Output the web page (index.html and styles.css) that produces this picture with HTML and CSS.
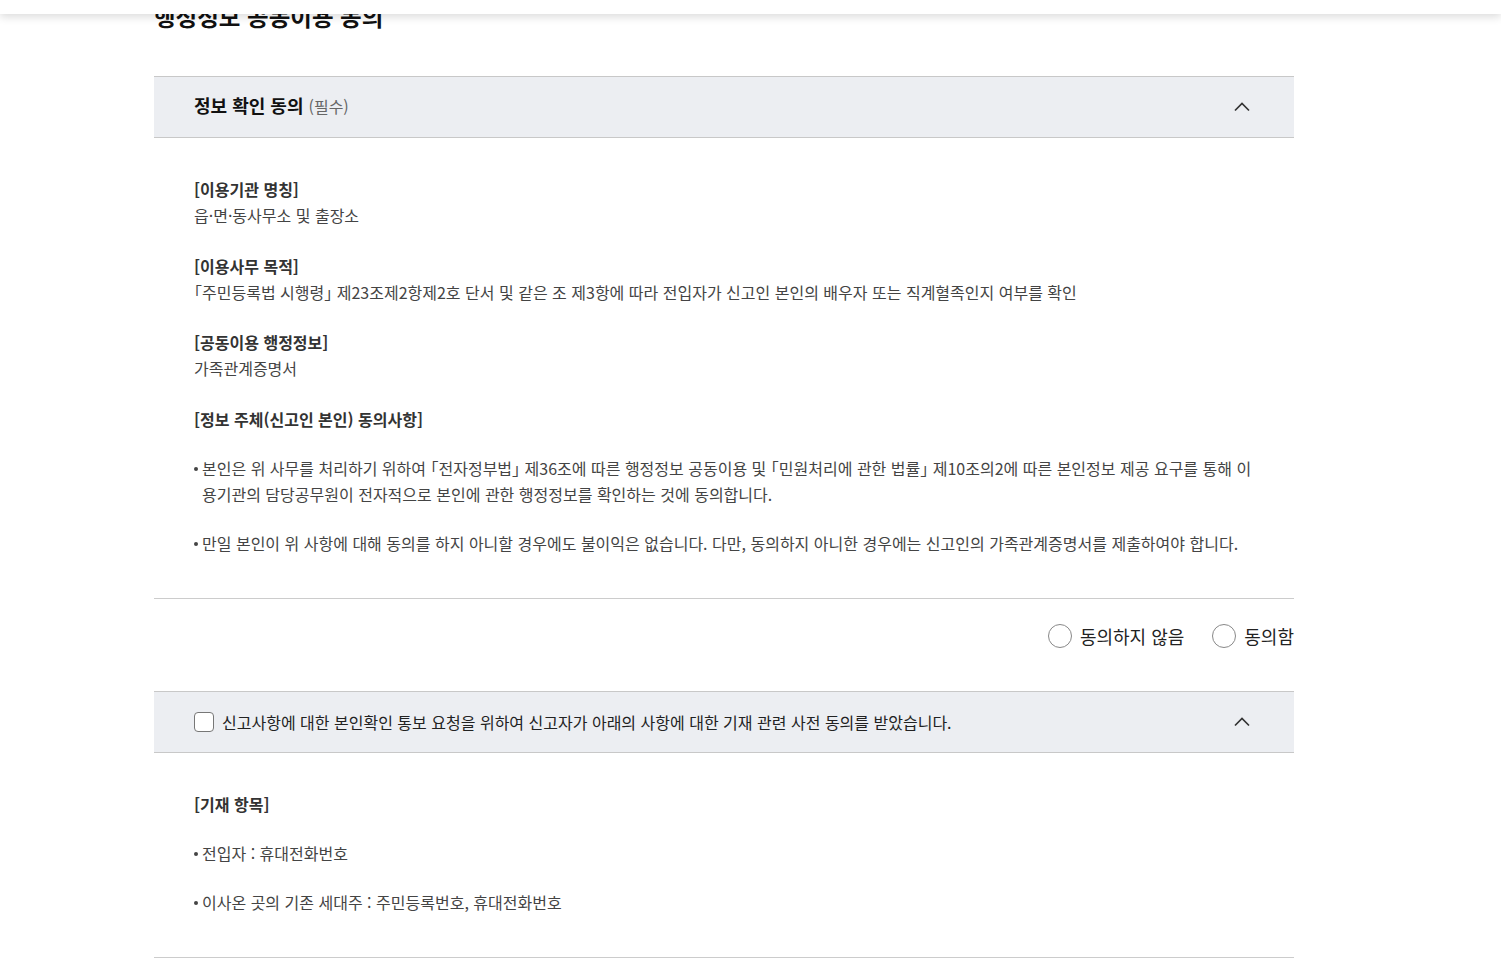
FILE: index.html
```html
<!DOCTYPE html>
<html lang="ko">
<head>
  <meta charset="UTF-8">
  <title>행정정보 공동이용 동의</title>
  <link rel="stylesheet" href="styles.css">
</head>
<body>

  <div class="top-bar"></div>

  <main class="wrap">
    <h2 class="page-title">행정정보 공동이용 동의</h2>

    <section class="accordion">
      <div class="acc-head">
        <p class="acc-title"><strong>정보 확인 동의</strong> <span class="required">(필수)</span></p>
        <svg class="chevron" width="16" height="16" viewBox="0 0 16 16"><polyline points="1,11.5 8,4.5 15,11.5" /></svg>
      </div>
      <div class="acc-body">
        <dl class="info">
          <dt>[이용기관 명칭]</dt>
          <dd>읍·면·동사무소 및 출장소</dd>
          <dt>[이용사무 목적]</dt>
          <dd>「주민등록법 시행령」 제23조제2항제2호 단서 및 같은 조 제3항에 따라 전입자가 신고인 본인의 배우자 또는 직계혈족인지 여부를 확인</dd>
          <dt>[공동이용 행정정보]</dt>
          <dd>가족관계증명서</dd>
          <dt>[정보 주체(신고인 본인) 동의사항]</dt>
        </dl>
        <ul class="bullets">
          <li>본인은 위 사무를 처리하기 위하여 「전자정부법」 제36조에 따른 행정정보 공동이용 및 「민원처리에 관한 법률」 제10조의2에 따른 본인정보 제공 요구를 통해 이용기관의 담당공무원이 전자적으로 본인에 관한 행정정보를 확인하는 것에 동의합니다.</li>
          <li>만일 본인이 위 사항에 대해 동의를 하지 아니할 경우에도 불이익은 없습니다. 다만, 동의하지 아니한 경우에는 신고인의 가족관계증명서를 제출하여야 합니다.</li>
        </ul>
      </div>
    </section>

    <div class="choice">
      <label class="radio"><input type="radio" name="agree"><span class="circle"></span>동의하지 않음</label>
      <label class="radio"><input type="radio" name="agree"><span class="circle"></span>동의함</label>
    </div>

    <section class="accordion">
      <div class="acc-head">
        <label class="check"><input type="checkbox"><span class="box"></span>신고사항에 대한 본인확인 통보 요청을 위하여 신고자가 아래의 사항에 대한 기재 관련 사전 동의를 받았습니다.</label>
        <svg class="chevron" width="16" height="16" viewBox="0 0 16 16"><polyline points="1,11.5 8,4.5 15,11.5" /></svg>
      </div>
      <div class="acc-body">
        <dl class="info">
          <dt>[기재 항목]</dt>
        </dl>
        <ul class="bullets">
          <li>전입자 : 휴대전화번호</li>
          <li>이사온 곳의 기존 세대주 : 주민등록번호, 휴대전화번호</li>
        </ul>
      </div>
    </section>
  </main>

</body>
</html>
```

FILE: styles.css
```css
body {
  margin: 0;
  background: #fff;
  font-family: "Noto Sans CJK KR", "Noto Sans", sans-serif;
  font-feature-settings: "halt";
  color: #444;
}

.top-bar {
  position: fixed;
  top: 0;
  left: 0;
  right: 0;
  height: 14px;
  background: #fff;
  box-shadow: 0 3px 8px rgba(0, 0, 0, 0.14);
  z-index: 10;
}

.wrap {
  width: 1140px;
  margin-left: 154px;
  padding-bottom: 40px;
}

.page-title {
  margin: 0;
  font-size: 23.5px;
  line-height: 32px;
  font-weight: 700;
  color: #111;
  margin-bottom: 44px;
}

.accordion {
  border-bottom: 1px solid #ccc;
}

.acc-head {
  display: flex;
  align-items: center;
  justify-content: space-between;
  height: 60px;
  padding: 0 44px 0 40px;
  background: #eceef2;
  border-top: 1px solid #c8c8c8;
  border-bottom: 1px solid #c8c8c8;
}

.acc-title {
  margin: 0;
  padding-bottom: 4px;
  font-size: 18px;
  color: #111;
}

.acc-title strong {
  font-weight: 700;
}

.required {
  font-size: 16px;
  color: #666;
}

.chevron {
  fill: none;
  stroke: #333;
  stroke-width: 1.7;
}

.acc-body {
  padding: 38px 40px 42px;
  font-size: 16px;
  line-height: 26px;
}

.info {
  margin: 0;
}

.info dt {
  font-weight: 700;
  color: #333;
}

.info dd {
  margin: 0 0 24.5px;
}

.bullets {
  list-style: none;
  margin: 0;
  padding: 0;
}

.bullets li {
  margin-top: 23px;
  padding-left: 8px;
}

.bullets li::before {
  content: "";
  display: inline-block;
  width: 4px;
  height: 4px;
  border-radius: 50%;
  background: #444;
  margin-left: -8px;
  margin-right: 4px;
  vertical-align: 4px;
}

.choice {
  display: flex;
  justify-content: flex-end;
  gap: 28px;
  padding: 25px 0 43px;
}

.radio {
  display: flex;
  align-items: center;
  gap: 8px;
  font-size: 18px;
  line-height: 24px;
  color: #222;
  cursor: pointer;
}

.radio input,
.check input {
  display: none;
}

.circle {
  width: 22px;
  height: 22px;
  border: 1px solid #888;
  border-radius: 50%;
  background: #fff;
}

.check {
  display: flex;
  align-items: center;
  gap: 8px;
  font-size: 16px;
  color: #222;
  cursor: pointer;
}

.box {
  width: 18px;
  height: 18px;
  border: 1px solid #777;
  border-radius: 4px;
  background: #fff;
}
```
